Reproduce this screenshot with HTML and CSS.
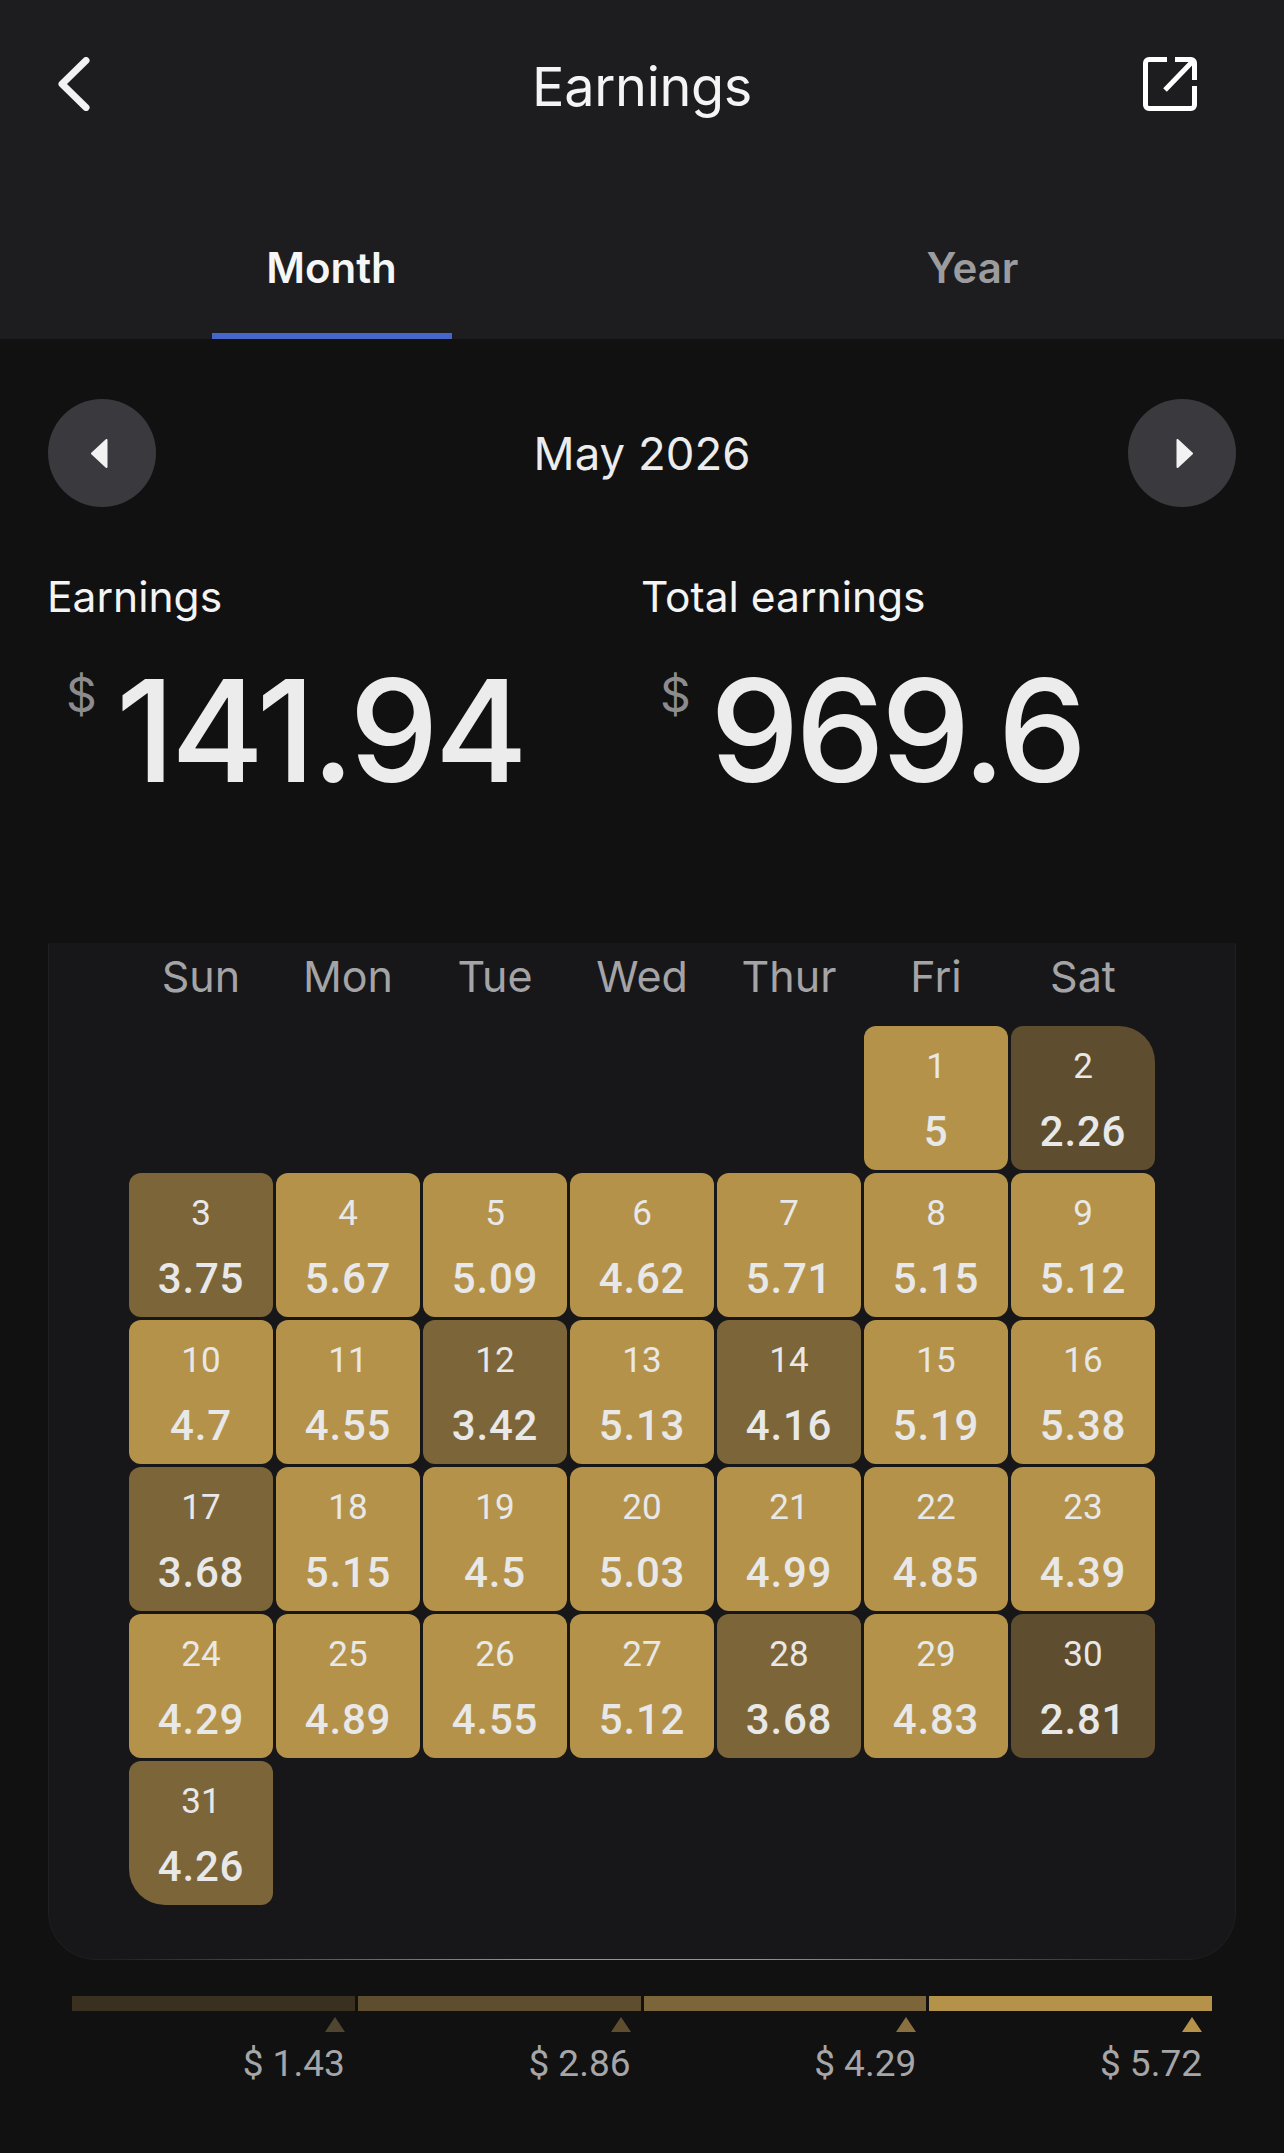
FILE: index.html
```html
<!DOCTYPE html>
<html lang="en">
<head>
<meta charset="utf-8">
<title>Earnings</title>
<link rel="stylesheet" href="styles.css">
</head>
<body>
<div class="page">
  <header class="head">
    <div class="topbar">
      <svg class="ic-back" viewBox="0 0 34 54"><path d="M28 3.5 L4 27 L28 50.5" fill="none" stroke="#f2f2f2" stroke-width="7" stroke-linecap="round" stroke-linejoin="round"/></svg>
      <h1 class="title">Earnings</h1>
      <svg class="ic-export" viewBox="0 0 54 54"><path d="M24 2.5 H6 a3.5 3.5 0 0 0 -3.5 3.5 V48 a3.5 3.5 0 0 0 3.5 3.5 H48 a3.5 3.5 0 0 0 3.5 -3.5 V29" fill="none" stroke="#fff" stroke-width="5"/><path d="M32 2.5 H48 a3.5 3.5 0 0 1 3.5 3.5 V23 M49 5 L22 33" fill="none" stroke="#fff" stroke-width="5"/></svg>
    </div>
    <nav class="tabs">
      <div class="tab tab-on">Month<span class="tab-bar"></span></div>
      <div class="tab">Year</div>
    </nav>
  </header>
  <section class="pager">
    <div class="round round-l"><svg class="tri" viewBox="0 0 17 29"><path d="M15.5 1 V28 L1 14.5 Z" fill="#f2f2f2" stroke="#f2f2f2" stroke-width="2" stroke-linejoin="round"/></svg></div>
    <div class="month">May 2026</div>
    <div class="round round-r"><svg class="tri" viewBox="0 0 17 29"><path d="M1.5 1 V28 L16 14.5 Z" fill="#f2f2f2" stroke="#f2f2f2" stroke-width="2" stroke-linejoin="round"/></svg></div>
  </section>
  <section class="stats">
    <div class="stat"><div class="stat-label">Earnings</div><div class="stat-val"><span class="cur">$</span><span class="num">141.94</span></div></div>
    <div class="stat"><div class="stat-label">Total earnings</div><div class="stat-val"><span class="cur">$</span><span class="num">969.6</span></div></div>
  </section>
  <section class="card">
    <div class="weekdays"><span>Sun</span><span>Mon</span><span>Tue</span><span>Wed</span><span>Thur</span><span>Fri</span><span>Sat</span></div>
    <div class="grid">
      <div class="cell g s6"><b>1</b><i>5</i></div><div class="cell d tr"><b>2</b><i>2.26</i></div>
      <div class="cell m"><b>3</b><i>3.75</i></div><div class="cell g"><b>4</b><i>5.67</i></div><div class="cell g"><b>5</b><i>5.09</i></div><div class="cell g"><b>6</b><i>4.62</i></div><div class="cell g"><b>7</b><i>5.71</i></div><div class="cell g"><b>8</b><i>5.15</i></div><div class="cell g"><b>9</b><i>5.12</i></div>
      <div class="cell g"><b>10</b><i>4.7</i></div><div class="cell g"><b>11</b><i>4.55</i></div><div class="cell m"><b>12</b><i>3.42</i></div><div class="cell g"><b>13</b><i>5.13</i></div><div class="cell m"><b>14</b><i>4.16</i></div><div class="cell g"><b>15</b><i>5.19</i></div><div class="cell g"><b>16</b><i>5.38</i></div>
      <div class="cell m"><b>17</b><i>3.68</i></div><div class="cell g"><b>18</b><i>5.15</i></div><div class="cell g"><b>19</b><i>4.5</i></div><div class="cell g"><b>20</b><i>5.03</i></div><div class="cell g"><b>21</b><i>4.99</i></div><div class="cell g"><b>22</b><i>4.85</i></div><div class="cell g"><b>23</b><i>4.39</i></div>
      <div class="cell g"><b>24</b><i>4.29</i></div><div class="cell g"><b>25</b><i>4.89</i></div><div class="cell g"><b>26</b><i>4.55</i></div><div class="cell g"><b>27</b><i>5.12</i></div><div class="cell m"><b>28</b><i>3.68</i></div><div class="cell g"><b>29</b><i>4.83</i></div><div class="cell d"><b>30</b><i>2.81</i></div>
      <div class="cell m bl"><b>31</b><i>4.26</i></div>
    </div>
  </section>
  <section class="legend">
    <div class="leg"><div class="seg c1"></div><div class="arrow a1"></div><div class="leg-text">$ 1.43</div></div>
    <div class="leg"><div class="seg c2"></div><div class="arrow a2"></div><div class="leg-text">$ 2.86</div></div>
    <div class="leg"><div class="seg c3"></div><div class="arrow a3"></div><div class="leg-text">$ 4.29</div></div>
    <div class="leg"><div class="seg c4"></div><div class="arrow a4"></div><div class="leg-text">$ 5.72</div></div>
  </section>
</div>
</body>
</html>
```
FILE: styles.css
```css
* { box-sizing: border-box; margin: 0; padding: 0; }
html, body { background: #111112; }
body { font-family: Inter, "Noto Sans", sans-serif; color: #f2f2f2; }
.page { width: 1284px; height: 2153px; overflow: hidden; }
.head { background: #1d1d20; height: 339px; display: flex; flex-direction: column; overflow: hidden; }
.topbar { height: 170px; display: grid; grid-template-columns: 1fr auto 1fr; align-items: start; padding: 57px 58px 0; }
.ic-back { width: 34px; height: 54px; }
.ic-export { width: 54px; height: 54px; justify-self: end; margin-right: 29px; }
.title { font-size: 54px; font-weight: 400; line-height: 60px; letter-spacing: -0.3px; color: #f4f4f4; }
.tabs { flex: 1; display: flex; padding-left: 11px; }
.tab { position: relative; flex: 0 0 641px; text-align: center; font-size: 42px; font-weight: 600; line-height: 48px; padding-top: 74px; color: #9c9c9e; }
.tab-on { color: #f6f6f6; }
.tab-bar { position: absolute; left: 201px; bottom: 0; width: 240px; height: 6px; background: #4766cc; }
.pager { display: flex; align-items: center; justify-content: space-between; padding: 60px 48px 0; }
.round { width: 108px; height: 108px; border-radius: 50%; background: #3a3a3e; display: flex; align-items: center; justify-content: center; }
.round-l { padding-right: 5px; }
.round-r { padding-left: 5px; }
.tri { width: 17px; height: 29px; }
.month { font-size: 45.5px; color: #ececec; }
.stats { display: flex; padding: 62px 48px 0; }
.stat { width: 594px; }
.stat-label { font-size: 42.5px; line-height: 56px; color: #f4f4f4; margin-left: -1px; }
.stat-val { display: flex; align-items: flex-start; padding: 30px 0 0 18px; }
.cur { font-size: 48px; line-height: 56px; color: #8c8c8e; width: 50px; margin-top: 12px; }
.num { font-size: 142px; font-weight: 500; line-height: 150px; letter-spacing: -4px; color: #ececec; }
.card { width: 1188px; height: 1017px; margin: 138px 48px 0; position: relative; background: #17171a; border: 1px solid #1f1f22; border-top: 0; border-radius: 0 0 48px 48px; padding: 0 80px; }
.card::after { content: ""; position: absolute; left: 60px; right: 60px; bottom: -1px; height: 1px; background: linear-gradient(90deg, #1f1f22, #b5924a 40%, #b5924a 60%, #1f1f22); }
.weekdays { display: grid; grid-template-columns: repeat(7, 144px); gap: 3px; height: 83px; padding-bottom: 18px; align-items: center; text-align: center; font-size: 43px; color: #a4a4a6; }
.grid { display: grid; grid-template-columns: repeat(7, 144px); grid-auto-rows: 144px; gap: 3px; }
.cell { border-radius: 12px; display: flex; flex-direction: column; align-items: center; font-family: Roboto, sans-serif; color: #e8e8e8; padding-top: 20px; }
.cell b { font-size: 35px; font-weight: 400; line-height: 42px; }
.cell i { font-style: normal; font-size: 42px; font-weight: 500; line-height: 48px; margin-top: 20px; letter-spacing: 0.8px; }
.s6 { grid-column-start: 6; }
.g { background: #b5924a; }
.m { background: #7c6538; }
.d { background: #5e4e2f; }
.tr { border-top-right-radius: 36px; }
.bl { border-bottom-left-radius: 36px; }
.legend { margin: 36px 72px 0; display: grid; grid-template-columns: repeat(4, 1fr); gap: 3px; }
.leg { display: flex; flex-direction: column; align-items: flex-end; }
.seg { width: 100%; height: 15px; }
.c1 { background: #3a3020; }
.c2 { background: #5e4e2f; }
.c3 { background: #7c6538; }
.c4 { background: #b5924a; }
.arrow { margin: 6px 10px 0 0; width: 0; height: 0; border-left: 10.5px solid transparent; border-right: 10.5px solid transparent; border-bottom: 15px solid; }
.a1 { border-bottom-color: #4f4530; }
.a2 { border-bottom-color: #5e4e2f; }
.a3 { border-bottom-color: #8a7040; }
.a4 { border-bottom-color: #b5924a; }
.leg-text { font-family: Roboto, sans-serif; font-size: 37px; line-height: 44px; color: #a6a6a8; margin: 10px 10px 0 0; }
```
